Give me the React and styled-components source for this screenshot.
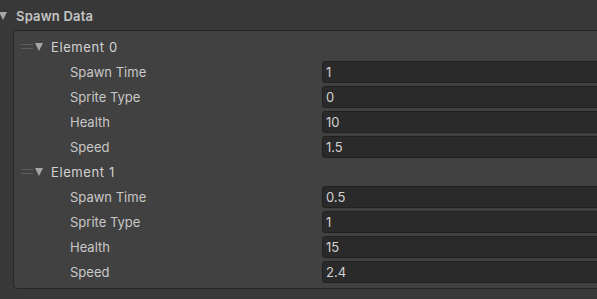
import React from 'react';
import styled, { createGlobalStyle } from 'styled-components';

const GlobalStyle = createGlobalStyle`
    html, body {
        margin: 0;
        padding: 0;
        background: #383838;
        overflow: hidden;
    }
    body {
        font-family: Inter, "Noto Sans", sans-serif;
        font-size: 13px;
        color: #d2d2d2;
    }
`

const Inspector = styled.div`
    width: 597px;
    height: 299px;
    overflow: hidden;
    background: #383838;
`

const Foldout = styled.div`
    display: flex;
    align-items: center;
    height: 30px;
    padding-top: 2px;
    box-sizing: border-box;
`

const Arrow = styled.span`
    display: inline-block;
    flex: none;
    width: 0;
    height: 0;
    border-left: 4.5px solid transparent;
    border-right: 4.5px solid transparent;
    border-top: 8px solid #a5a5a5;
    margin-left: ${p => p.$offset || 0}px;
    margin-right: ${p => p.$gap}px;
`

const Title = styled.span`
    font-weight: 600;
    color: #c4c4c4;
    font-size: 13px;
    letter-spacing: 0.2px;
`

const Panel = styled.div`
    margin-left: 13px;
    width: 610px;
    height: 259px;
    box-sizing: border-box;
    background: #414141;
    border: 1px solid #262626;
    border-radius: 4px;
    padding-top: 3px;
`

const Row = styled.div`
    display: flex;
    align-items: center;
    height: 25px;
`

const Handle = styled.span`
    display: inline-block;
    flex: none;
    width: 12px;
    height: 3px;
    border-top: 1px solid #5c5c5c;
    border-bottom: 1px solid #5c5c5c;
    margin-left: 7px;
    margin-right: 2px;
`

const ElementLabel = styled.span`
    color: #d2d2d2;
    letter-spacing: 0.6px;
`

const Label = styled.span`
    width: 252px;
    padding-left: 56px;
    color: #c8c8c8;
`

const Field = styled.div`
    flex: 1;
    height: 22px;
    box-sizing: border-box;
    background: #2a2a2a;
    border: 1px solid #212121;
    border-radius: 3px;
    display: flex;
    align-items: center;
    padding-left: 3px;
    color: #d2d2d2;
`

const elements = [
    { spawnTime: '1', spriteType: '0', health: '10', speed: '1.5' },
    { spawnTime: '0.5', spriteType: '1', health: '15', speed: '2.4' },
];

export default function App() {
    return (
        <Inspector>
            <GlobalStyle />
            <Foldout>
                <Arrow $offset={-1} $gap={9} />
                <Title>Spawn Data</Title>
            </Foldout>
            <Panel>
                {elements.map((el, i) => (
                    <React.Fragment key={i}>
                        <Row>
                            <Handle />
                            <Arrow $gap={8} />
                            <ElementLabel>Element {i}</ElementLabel>
                        </Row>
                        <Row>
                            <Label>Spawn Time</Label>
                            <Field>{el.spawnTime}</Field>
                        </Row>
                        <Row>
                            <Label>Sprite Type</Label>
                            <Field>{el.spriteType}</Field>
                        </Row>
                        <Row>
                            <Label>Health</Label>
                            <Field>{el.health}</Field>
                        </Row>
                        <Row>
                            <Label>Speed</Label>
                            <Field>{el.speed}</Field>
                        </Row>
                    </React.Fragment>
                ))}
            </Panel>
        </Inspector>
    );
}
